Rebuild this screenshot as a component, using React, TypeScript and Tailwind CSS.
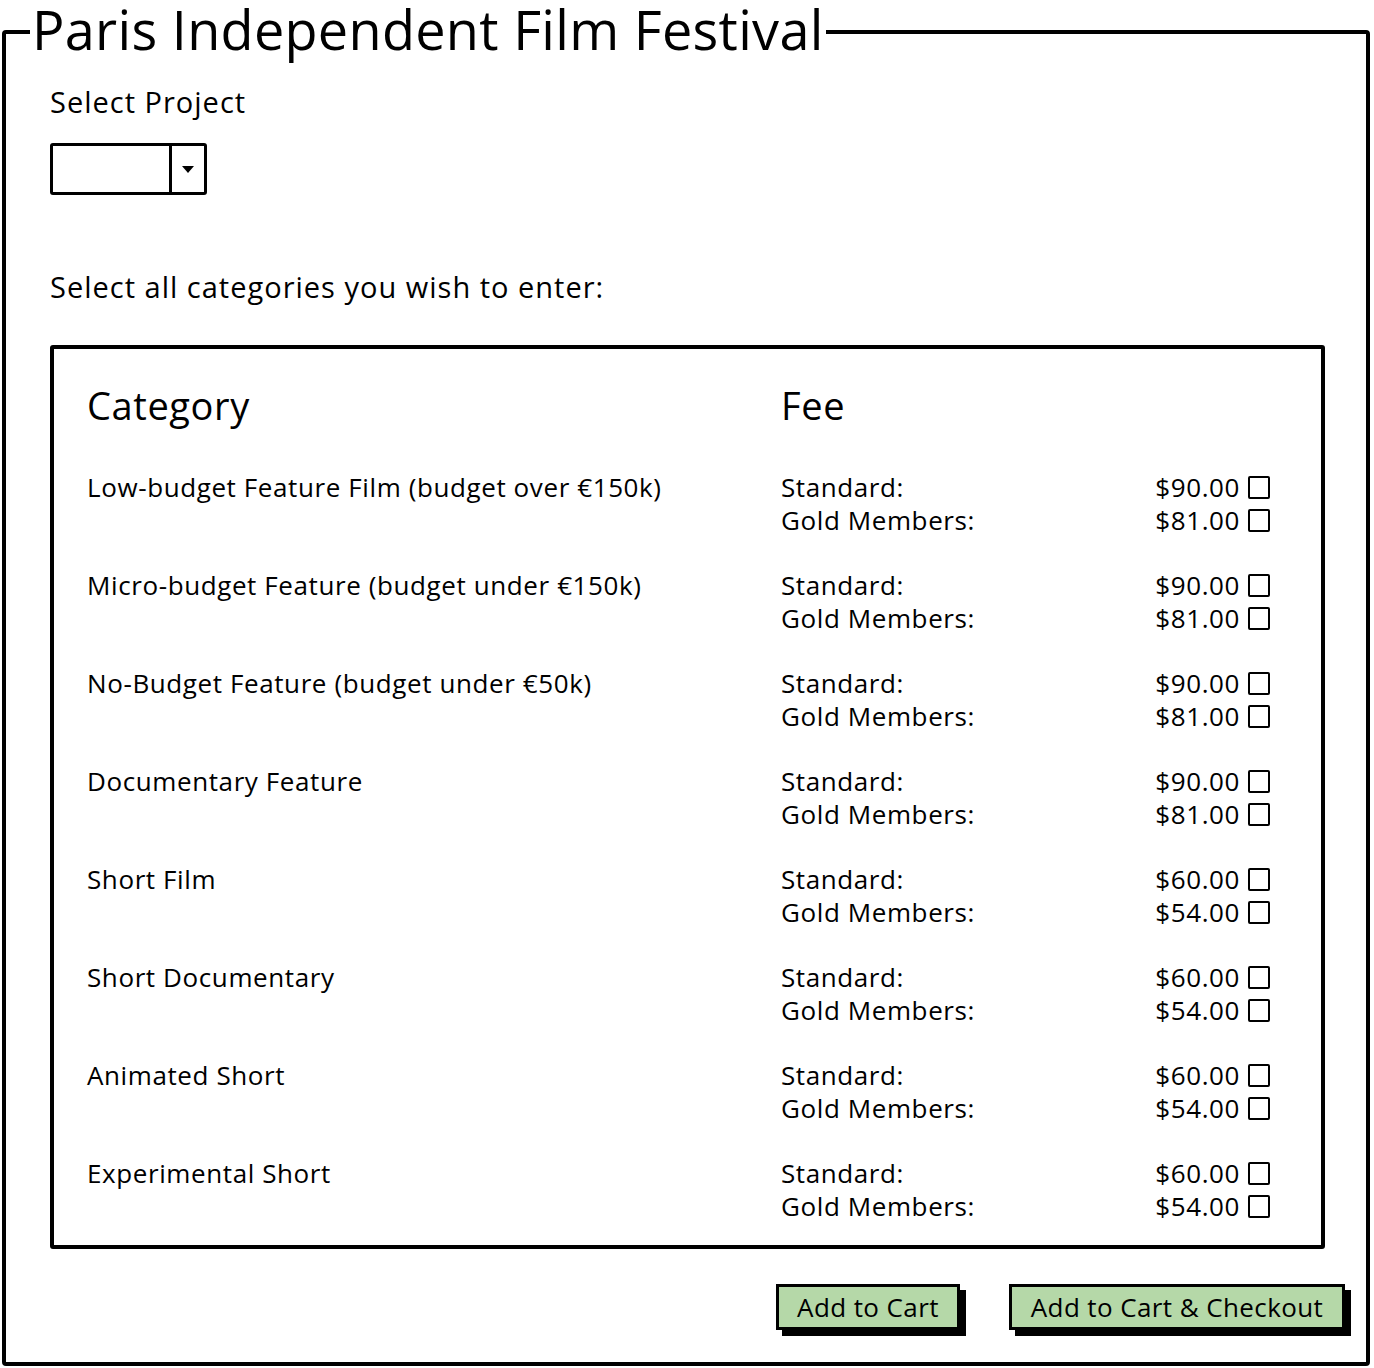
import React from "react"

const rows = [
  { name: "Low-budget Feature Film (budget over €150k)", std: "$90.00", gold: "$81.00" },
  { name: "Micro-budget Feature (budget under €150k)", std: "$90.00", gold: "$81.00" },
  { name: "No-Budget Feature (budget under €50k)", std: "$90.00", gold: "$81.00" },
  { name: "Documentary Feature", std: "$90.00", gold: "$81.00" },
  { name: "Short Film", std: "$60.00", gold: "$54.00" },
  { name: "Short Documentary", std: "$60.00", gold: "$54.00" },
  { name: "Animated Short", std: "$60.00", gold: "$54.00" },
  { name: "Experimental Short", std: "$60.00", gold: "$54.00" },
]

function Box() {
  return <span className="inline-block w-[22px] h-[23px] border-2 border-black rounded-[2px] bg-white" />
}

function FeeLine({ label, price }: { label: string; price: string }) {
  return (
    <div className="flex items-center h-[33px]">
      <span className="w-[300px]">{label}</span>
      <span className="flex-1 text-right pr-[8px]">{price}</span>
      <Box />
    </div>
  )
}

export default function App() {
  return (
    <div className="bg-white w-[1374px] h-[1368px] pt-[2px] text-black font-['Open_Sans',sans-serif]">
      <fieldset className="ml-[2px] w-[1368px] h-[1364px] border-[4px] border-black rounded-[4px] pl-[44px] pr-[41px]">
        <legend className="ml-[-20px] px-[2px] pb-[6px] text-[54px] leading-[54px] font-medium tracking-[0.3px]">
          Paris Independent Film Festival
        </legend>

        <div className="text-[29px] leading-[32px] font-medium tracking-[1px] mt-[24px]">Select Project</div>

        <div className="mt-[25px] flex w-[157px] h-[52px] border-[3px] border-black rounded-[3px]">
          <div className="flex-1 border-r-[3px] border-black" />
          <div className="w-[32px] flex items-center justify-center">
            <svg width="14" height="9" viewBox="0 0 14 9">
              <path d="M1 1h12L7 8z" fill="#000" />
            </svg>
          </div>
        </div>

        <div className="mt-[76px] text-[29px] leading-[32px] font-medium tracking-[1px]">
          Select all categories you wish to enter:
        </div>

        <div className="mt-[42px] w-[1275px] border-[4px] border-black rounded-[3px] pl-[33px] pr-[51px] pt-[36px] pb-[22px]">
          <div className="flex text-[38px] leading-[40px] font-medium tracking-[0.6px]">
            <div className="w-[694px]">Category</div>
            <div>Fee</div>
          </div>
          <div className="mt-[46px] flex flex-col gap-[32px] text-[26px] font-medium tracking-[0.6px]">
            {rows.map((r) => (
              <div key={r.name} className="flex">
                <div className="w-[694px] h-[33px] flex items-center">{r.name}</div>
                <div className="flex-1">
                  <FeeLine label="Standard:" price={r.std} />
                  <FeeLine label="Gold Members:" price={r.gold} />
                </div>
              </div>
            ))}
          </div>
        </div>

        <div className="mt-[35px] flex justify-end gap-[49px] mr-[-20px] text-[26px] font-medium tracking-[0.4px]">
          <button className="w-[184px] h-[46px] bg-[#b5d8a8] border-[3px] border-black shadow-[6px_6px_0_#000]">
            Add to Cart
          </button>
          <button className="w-[336px] h-[46px] bg-[#b5d8a8] border-[3px] border-black shadow-[6px_6px_0_#000]">
            Add to Cart &amp; Checkout
          </button>
        </div>
      </fieldset>
    </div>
  )
}
